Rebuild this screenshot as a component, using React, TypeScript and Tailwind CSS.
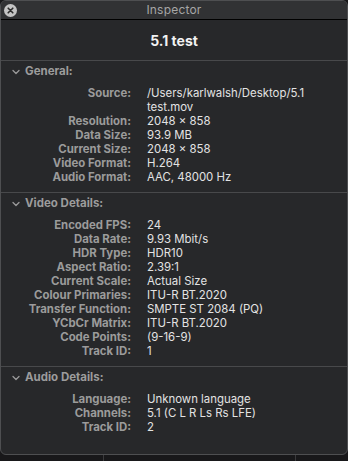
const general: [string, string[]][] = [
  ["Source:", ["/Users/karlwalsh/Desktop/5.1", "test.mov"]],
  ["Resolution:", ["2048 × 858"]],
  ["Data Size:", ["93.9 MB"]],
  ["Current Size:", ["2048 × 858"]],
  ["Video Format:", ["H.264"]],
  ["Audio Format:", ["AAC, 48000 Hz"]],
];

const video: [string, string[]][] = [
  ["Encoded FPS:", ["24"]],
  ["Data Rate:", ["9.93 Mbit/s"]],
  ["HDR Type:", ["HDR10"]],
  ["Aspect Ratio:", ["2.39:1"]],
  ["Current Scale:", ["Actual Size"]],
  ["Colour Primaries:", ["ITU-R BT.2020"]],
  ["Transfer Function:", ["SMPTE ST 2084 (PQ)"]],
  ["YCbCr Matrix:", ["ITU-R BT.2020"]],
  ["Code Points:", ["(9-16-9)"]],
  ["Track ID:", ["1"]],
];

const audio: [string, string[]][] = [
  ["Language:", ["Unknown language"]],
  ["Channels:", ["5.1 (C L R Ls Rs LFE)"]],
  ["Track ID:", ["2"]],
];

function Chevron() {
  return (
    <svg width="8" height="6" viewBox="0 0 8 6" className="ml-[11px] mr-[5px]">
      <path d="M1 1.5 L4 4.5 L7 1.5" fill="none" stroke="#9a9a9a" strokeWidth="1.3" strokeLinecap="round" strokeLinejoin="round" />
    </svg>
  );
}

function Section({ title, rows, grow }: { title: string; rows: [string, string[]][]; grow?: boolean }) {
  return (
    <div className={grow ? "flex-1 pt-[3px]" : "pt-[3px] pb-[8px] border-b border-[#48494b]"}>
      <div className="flex items-center h-[16px]">
        <Chevron />
        <span className="text-[11.5px] font-bold text-[#9c9c9c]">{title}</span>
      </div>
      <div className="mt-[6px] grid grid-cols-[130px_1fr] gap-x-[16px] text-[11.4px] leading-[14px]">
        {rows.map(([label, values]) => (
          <div key={label + values[0]} className="contents">
            <div className="text-right font-bold text-[#9b9b9b]">{label}</div>
            <div className="text-[#e3e3e3]">
              {values.map((v) => (
                <div key={v}>{v}</div>
              ))}
            </div>
          </div>
        ))}
      </div>
    </div>
  );
}

export default function App() {
  return (
    <div
      className="relative w-[348px] h-[461px] bg-[#18181a] overflow-hidden"
      style={{ fontFamily: "Inter, 'Liberation Sans', sans-serif" }}
    >
      {/* background window edges */}
      <div className="absolute left-[103px] top-[450px] w-px h-[11px] bg-[#3a3a3c]" />
      <div className="absolute left-[295px] top-[450px] w-px h-[11px] bg-[#3a3a3c]" />

      <div className="relative flex flex-col w-[348px] h-[455px] rounded-[6px] border border-[#4e4f51] bg-[#27282a] overflow-hidden">
        {/* TITLE BAR */}
        <div className="relative h-[19px] bg-[#313234] border-b border-black flex items-center justify-center shrink-0">
          <div className="absolute left-[3px] top-[3px] w-[13px] h-[13px] rounded-full bg-[#c4c4c4] flex items-center justify-center">
            <svg width="7" height="7" viewBox="0 0 7 7">
              <path d="M1.2 1.2 L5.8 5.8 M5.8 1.2 L1.2 5.8" stroke="#2b2b2b" strokeWidth="1.6" strokeLinecap="round" />
            </svg>
          </div>
          <span className="text-[12px] text-[#a6a6a6] tracking-[0.2px]">Inspector</span>
        </div>

        {/* FILE NAME */}
        <div className="h-[41px] shrink-0 flex items-center justify-center border-b border-[#48494b]">
          <span className="text-[14px] font-bold text-[#f2f2f2]">5.1 test</span>
        </div>

        <Section title="General:" rows={general} />
        <Section title="Video Details:" rows={video} />
        <Section title="Audio Details:" rows={audio} grow />
      </div>
    </div>
  );
}
